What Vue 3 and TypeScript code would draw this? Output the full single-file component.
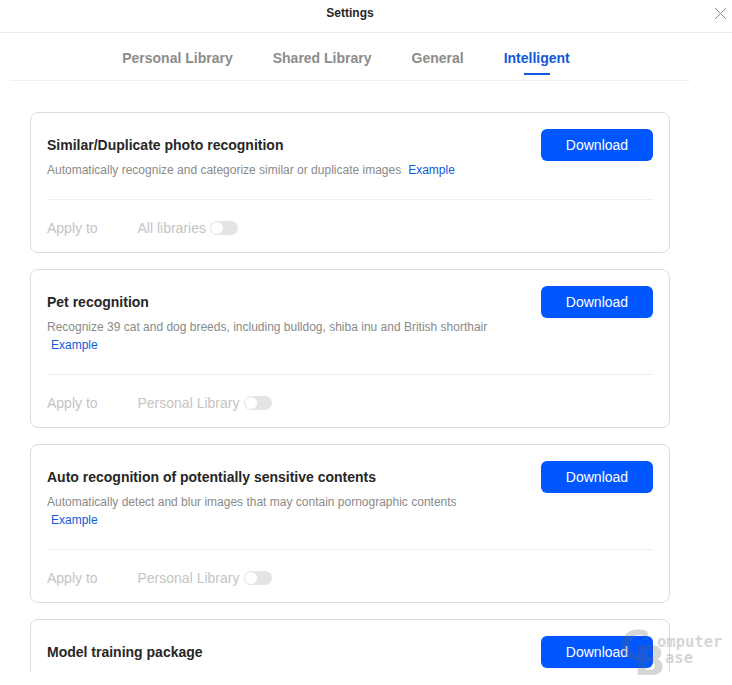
<script setup lang="ts">
interface Card {
  title: string
  desc: string
  exampleBreak: boolean
  scope: string
  short?: boolean
}
const tabs = ['Personal Library', 'Shared Library', 'General', 'Intelligent']
const cards: Card[] = [
  { title: 'Similar/Duplicate photo recognition', desc: 'Automatically recognize and categorize similar or duplicate images', exampleBreak: false, scope: 'All libraries' },
  { title: 'Pet recognition', desc: 'Recognize 39 cat and dog breeds, including bulldog, shiba inu and British shorthair', exampleBreak: true, scope: 'Personal Library' },
  { title: 'Auto recognition of potentially sensitive contents', desc: 'Automatically detect and blur images that may contain pornographic contents', exampleBreak: true, scope: 'Personal Library' },
  { title: 'Model training package', desc: '', exampleBreak: false, scope: '', short: true },
]
</script>

<template>
  <div class="page">
    <header class="titlebar">
      <span class="title">Settings</span>
      <svg class="close" width="13" height="13" viewBox="0 0 13 13" aria-label="Close">
        <path d="M1 1l11 11M12 1L1 12" stroke="#8c8c8c" stroke-width="1" fill="none" />
      </svg>
    </header>
    <nav class="tabs">
      <span v-for="t in tabs" :key="t" class="tab" :class="{ active: t === 'Intelligent' }">{{ t }}</span>
    </nav>
    <main class="list">
      <section v-for="c in cards" :key="c.title" class="card" :class="{ short: c.short }">
        <div class="head">
          <div class="info">
            <h3>{{ c.title }}</h3>
            <p v-if="c.desc" class="desc">
              <span>{{ c.desc }}</span>
              <br v-if="c.exampleBreak" />
              <a class="example" :class="{ inline: !c.exampleBreak }">Example</a>
            </p>
          </div>
          <button class="dl">Download</button>
        </div>
        <div v-if="!c.short" class="apply">
          <span class="label">Apply to</span>
          <span class="scope">{{ c.scope }}</span>
          <span class="switch"><i></i></span>
        </div>
      </section>
    </main>
    <div class="mark" aria-hidden="true">
      <span class="big c">C</span>
      <span class="big b">B</span>
      <span class="small s1">omputer</span>
      <span class="small s2">ase</span>
    </div>
  </div>
</template>

<style>
html, body { margin: 0; background: #fff; overflow: hidden; }
</style>

<style scoped>
.page {
  position: relative;
  width: 732px;
  height: 685px;
  background: #fff;
  overflow: hidden;
  font-family: "Liberation Sans", Arial, sans-serif;
  color: #262626;
}
.titlebar {
  height: 32px;
  border-bottom: 1px solid #ebebeb;
  display: flex;
  align-items: center;
  justify-content: center;
  position: relative;
}
.title { font-size: 12px; font-weight: 700; margin-top: -7px; margin-right: 32px; }
.close { position: absolute; left: 714px; top: 7px; }
.tabs {
  margin: 0 42px 0 10px;
  padding-right: 8px;
  height: 47px;
  border-bottom: 1px solid #efefef;
  display: flex;
  justify-content: center;
  gap: 40px;
}
.tab {
  position: relative;
  font-size: 14px;
  font-weight: 700;
  color: #8c8c8c;
  line-height: 16px;
  padding-top: 17px;
}
.tab.active { color: #1257dc; }
.tab.active::after {
  content: "";
  position: absolute;
  left: 50%;
  bottom: 5px;
  width: 26px;
  height: 2px;
  margin-left: -13px;
  background: #1257dc;
}
.list {
  margin: 31px 62px 0 30px;
  height: 560px;
  overflow: hidden;
  display: flex;
  flex-direction: column;
  gap: 16px;
}
.card {
  flex: none;
  box-sizing: border-box;
  border: 1px solid #dcdcdc;
  border-radius: 8px;
  padding: 16px 16px 0;
}
.card.short { height: 120px; }
.head {
  display: flex;
  justify-content: space-between;
  align-items: flex-start;
  padding-bottom: 20px;
  border-bottom: 1px solid #efefef;
}
.card.short .head { border-bottom: 0; }
.info { width: 470px; }
h3 {
  margin: 0;
  font-size: 14px;
  line-height: 16px;
  font-weight: 700;
  color: #262626;
  padding-top: 8px;
}
.desc {
  margin: 8px 0 0;
  font-size: 12px;
  line-height: 18px;
  color: #8a8a8a;
}
.example { color: #0f5bd7; margin-left: 4px; }
.example.inline { margin-left: 7px; }
.dl {
  width: 112px;
  height: 32px;
  flex: none;
  border: 0;
  border-radius: 6px;
  background: #0057ff;
  color: #fff;
  font: 14px "Liberation Sans", Arial, sans-serif;
  padding: 0;
}
.apply {
  box-sizing: border-box;
  height: 52px;
  padding-top: 4px;
  display: flex;
  align-items: center;
  font-size: 14px;
  color: #c4c4c4;
}
.label { width: 90.5px; }
.scope { margin-right: 4.5px; }
.switch {
  width: 28px;
  height: 14px;
  border-radius: 7px;
  background: #e4e4e4;
  position: relative;
}
.switch i {
  position: absolute;
  left: 1px;
  top: 1px;
  width: 12px;
  height: 12px;
  border-radius: 50%;
  background: #fff;
}
.mark {
  position: absolute;
  left: 620px;
  top: 628px;
  width: 112px;
  height: 50px;
  opacity: 0.26;
  color: #666;
  font-weight: 700;
}
.big, .small { position: absolute; line-height: 1; }
.big { font-size: 41px; font-family: "DejaVu Sans", sans-serif; }
.c { left: 0; top: -2px; }
.b { left: 14px; top: 13px; }
.small { font-size: 15.5px; font-family: "DejaVu Sans Mono", monospace; }
.s1 { left: 37px; top: 7px; }
.s2 { left: 45px; top: 23px; }
</style>
